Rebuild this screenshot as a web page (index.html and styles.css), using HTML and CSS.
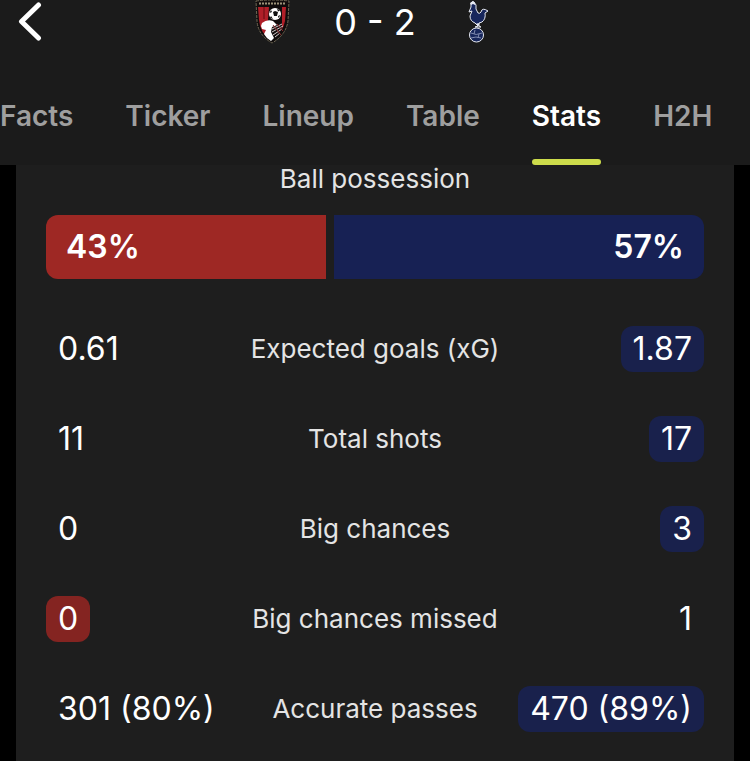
FILE: index.html
```html
<!DOCTYPE html>
<html lang="en">
    <head>
        <title>Bournemouth 0 - 2 Tottenham | Stats</title>
        <meta charset="utf-8" />
        <meta name="viewport" content="width=device-width,initial-scale=1">
        <link rel="stylesheet" href="styles.css">
    </head>
    <body>
        <header class="header">
            <div class="match">
                <button class="back" type="button" aria-label="Back">
                    <svg width="26" height="40" viewBox="0 0 26 40">
                        <path d="M22.500 3 5.500 19.500l17 16.500" fill="none" stroke="#fff" stroke-width="5" stroke-linecap="round" stroke-linejoin="round" />
                    </svg>
                </button>
                <div class="score">
                    <!-- home crest -->
                    <svg class="crest" viewBox="0 0 36 44" role="img" aria-label="Bournemouth">
                        <path d="M2 1q16-2 33 0l-1 20q-2 14-16 22Q4 35 3 21z" fill="#100c0c" stroke="#6f6753" stroke-width="1" stroke-dasharray="3 1" />
                        <path d="M4 7h11l-1 13 3 20Q6 33 5 20z" fill="#b01f28" />
                        <path d="M9 7h2v12H9z" fill="#8a151c" />
                        <path d="M28 7h4l-1 14q-1 5-3 8z" fill="#b01f28" />
                        <path d="M5 3.500h27" stroke="#9c9278" stroke-width="2" stroke-dasharray="2 1" />
                        <!-- header of the ball -->
                        <path d="M8 23q5-4 11-2l4 4-5 2-1 5 3 6-3 3q-5-3-7-7l2-4-4-1-1-3z" fill="#fff" />
                        <path d="M18 29l10-5M18 32l11-6M19 35l9-6M21 37l5-4" stroke="#d6caca" stroke-width="1" />
                        <path d="M19 25l8 10M23 24l6 7" stroke="#8c2a2e" stroke-width="1" />
                        <circle cx="21" cy="14" r="6" fill="#fff" />
                        <path d="M19 12l2-1 3 1-1 4h-3zM15.500 13l1.500-3 1 2zM23 8.500l3 2-2 1zM26.500 15l-2 3-.5-2zM17 16l2 3-3-1z" fill="#111" />
                    </svg>
                    <span class="result">0 - 2</span>
                    <!-- away crest -->
                    <svg class="crest" viewBox="0 0 36 44" role="img" aria-label="Tottenham">
                        <g fill="#17265c" stroke="#e6e9f2" stroke-width="1" stroke-linejoin="round">
                            <path d="M11 7V3q1-2 3-1l2 3q-1 4 2 8 2 1 3-1 1-5 7-1l-3 2q1 6-3 9l-3 1-1 3-3-3q-5-2-5-7l2-5-3 1z" />
                            <path d="M17 23l1 3-3 1h6l-2-1v-3" fill="none" />
                            <circle cx="16.500" cy="35" r="7" />
                        </g>
                        <path d="M11 5l-1-2 3-2 2 2v2l-2-1z" fill="#e6e9f2" />
                        <path d="M11 33q5 3 11 0M11 38q5-2 10 0M15 30l-1 4M19 34l-1 4" fill="none" stroke="#7f8ab0" stroke-width="1" />
                    </svg>
                </div>
            </div>
            <nav class="tabs">
                <a href="#facts">Facts</a>
                <a href="#ticker">Ticker</a>
                <a href="#lineup">Lineup</a>
                <a href="#table">Table</a>
                <a href="#stats" class="active" aria-current="page">Stats</a>
                <a href="#h2h">H2H</a>
            </nav>
        </header>
        <main class="panel" id="stats">
            <h2 class="title">Ball possession</h2>
            <div class="possession" style="grid-template-columns: 43fr 57fr">
                <div class="home">43%</div>
                <div class="away">57%</div>
            </div>
            <table class="stats">
                <tr>
                    <td><span>0.61</span></td>
                    <th scope="row">Expected goals (xG)</th>
                    <td><span class="away">1.87</span></td>
                </tr>
                <tr>
                    <td><span>11</span></td>
                    <th scope="row">Total shots</th>
                    <td><span class="away">17</span></td>
                </tr>
                <tr>
                    <td><span>0</span></td>
                    <th scope="row">Big chances</th>
                    <td><span class="away">3</span></td>
                </tr>
                <tr>
                    <td><span class="home">0</span></td>
                    <th scope="row">Big chances missed</th>
                    <td><span>1</span></td>
                </tr>
                <tr>
                    <td><span>301 (80%)</span></td>
                    <th scope="row">Accurate passes</th>
                    <td><span class="away">470 (89%)</span></td>
                </tr>
            </table>
        </main>
    </body>
</html>
```
FILE: styles.css
```css
* {
    padding: 0;
    margin: 0;
    box-sizing: border-box;
}
body {
    display: flex;
    flex-direction: column;
    min-height: 100vh;
    background-color: #000;
    color: #fff;
    font-family: Inter, "Liberation Sans", sans-serif;
    -webkit-font-smoothing: antialiased;
}

.header {
    background-color: #1b1b1b;
}

.match {
    display: grid;
    grid-template-columns: 1fr auto 1fr;
    align-items: center;
    height: 44px;
    padding: 0 16px;
}

.back {
    justify-self: start;
    height: 40px;
    border: none;
    background: none;
    cursor: pointer;
}

.score {
    display: flex;
    align-items: center;
    gap: 44px;
}

.crest {
    width: 36px;
    height: 44px;
}

.result {
    font-size: 36px;
    line-height: 44px;
}

.tabs {
    display: flex;
    gap: 52px;
    padding-top: 50px;
    overflow: hidden;
}

.tabs a {
    height: 71px;
    color: #9f9f9f;
    font-size: 28px;
    font-weight: 600;
    line-height: 44px;
    text-decoration: none;
}

.tabs .active {
    position: relative;
    color: #fff;
}

.tabs .active::after {
    content: "";
    position: absolute;
    left: 0;
    right: 0;
    bottom: 0;
    height: 6px;
    border-radius: 3px;
    background-color: #cddc4b;
}

.panel {
    flex: 1;
    margin: 0 16px;
    padding: 0 30px;
    background-color: #1e1e1e;
}

.title {
    color: #e4e4e4;
    font-size: 26px;
    font-weight: 400;
    line-height: 28px;
    text-align: center;
}

.possession {
    display: grid;
    gap: 8px;
    margin: 22px 0 24px;
    border-radius: 12px;
    overflow: hidden;
    font-size: 32px;
    font-weight: 600;
    line-height: 64px;
}

.possession div {
    padding: 0 20px;
}

.possession .home {
    background-color: #9e2824;
}

.possession .away {
    background-color: #172154;
    text-align: right;
}

.stats {
    width: 100%;
    table-layout: fixed;
    border-collapse: collapse;
}

.stats tr {
    height: 90px;
}

.stats td {
    width: 30%;
    font-size: 32px;
    line-height: 46px;
    white-space: nowrap;
}

.stats td:last-child {
    text-align: right;
}

.stats td span {
    display: inline-block;
    padding: 0 12px;
    border-radius: 12px;
    vertical-align: middle;
}

.stats td .home {
    background-color: #842421;
}

.stats td .away {
    background-color: #19214c;
}

.stats th {
    color: #e4e4e4;
    font-size: 26px;
    font-weight: 400;
    white-space: nowrap;
}
```
